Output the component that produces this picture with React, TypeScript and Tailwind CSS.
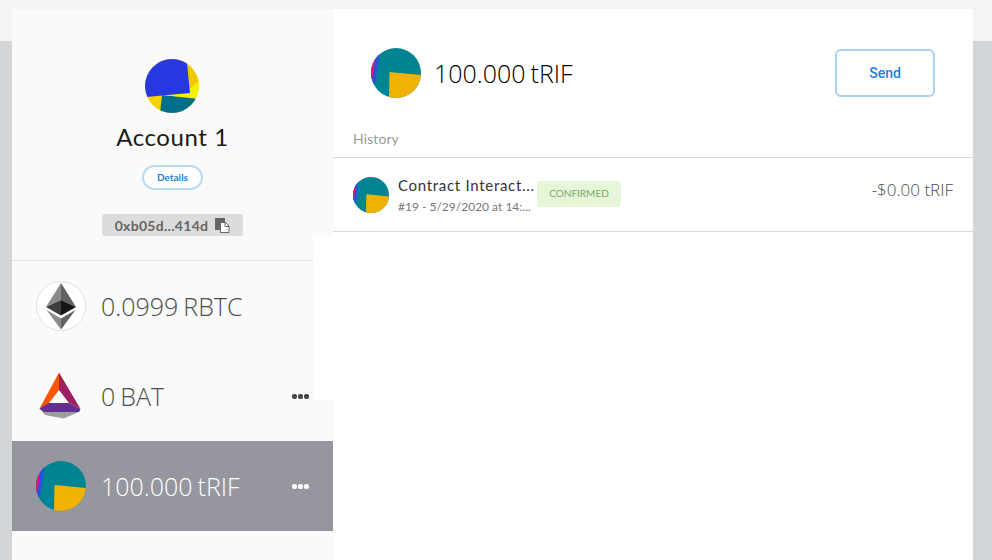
import React from 'react';

const TokenPie = ({ size }: { size: number }) => (
    <svg width={size} height={size} viewBox="0 0 50 50" className="shrink-0">
        <defs>
            <clipPath id={`pie-${size}`}>
                <circle cx="25" cy="25" r="25" />
            </clipPath>
        </defs>
        <g clipPath={`url(#pie-${size})`}>
            <rect width="50" height="50" fill="#008491" />
            <polygon points="0,0 9.5,0 4,36 0,36" fill="#2a52e0" />
            <polygon points="0,0 5.5,0 4,12 1,32 0,32" fill="#e8175d" />
            <polygon points="18.5,24 50,27 50,50 18,50" fill="#f2b200" />
        </g>
    </svg>
);

const AccountPie = () => (
    <svg width="54" height="54" viewBox="0 0 54 54">
        <defs>
            <clipPath id="acct">
                <circle cx="27" cy="27" r="27" />
            </clipPath>
        </defs>
        <g clipPath="url(#acct)">
            <rect width="54" height="54" fill="#f5ef00" />
            <polygon points="41,4 54,10 54,22 44,30" fill="#f0c905" />
            <polygon points="0,37 17,36 15,54 0,54" fill="#f5d100" />
            <polygon points="17,36 54,40 54,54 15,54" fill="#006f8c" />
            <polygon points="17,36 44,33 52,39 40,38" fill="#f5ef00" />
            <polygon points="-2,-4 41,-4 42,4 45,34 1,38 0,38" fill="#2639e0" />
        </g>
    </svg>
);

const EthIcon = () => (
    <div className="w-[50px] h-[50px] shrink-0 rounded-full border border-[#e2e2e2] bg-white">
        <svg width="48" height="48" viewBox="1 1 48 48">
            <polygon points="25,2 10,26 25,19" fill="#8a8a8a" />
            <polygon points="25,2 40,26 25,19" fill="#626262" />
            <polygon points="10,26 25,19 25,34.5" fill="#3d3d3d" />
            <polygon points="40,26 25,19 25,34.5" fill="#161616" />
            <polygon points="10.5,29 25,37.5 25,48.5" fill="#8c8c8c" />
            <polygon points="39.5,29 25,37.5 25,48.5" fill="#626262" />
        </svg>
    </div>
);

const BatIcon = () => (
    <svg width="50" height="50" viewBox="0 0 50 50" className="shrink-0">
        <polygon points="3.5,37.5 44,38 43,41 27.5,47.5 9,44" fill="#9e9e9e" />
        <polygon points="23,1.5 23,19 12.5,32.5 3.5,37.5" fill="#ff5400" />
        <polygon points="23,1.5 44.5,38 33,32 23,19" fill="#9e1f63" />
        <polygon points="12.5,32 33,32 44.5,38 43,41 8,41 3.5,37.5" fill="#662d91" />
    </svg>
);

const CopyIcon = () => (
    <svg width="15" height="15" viewBox="0 0 15 15" className="shrink-0">
        <rect x="0" y="0" width="10" height="12" rx="0.5" fill="#666666" />
        <path d="M5.5 4.5h5l3.5 3.5v6.5h-8.5z" fill="#ffffff" stroke="#666666" />
        <path d="M10 4.5v4h4" fill="none" stroke="#666666" />
    </svg>
);

const Dots = ({ color }: { color: string }) => (
    <div className={`flex gap-px ${color}`}>
        <span className="w-[5px] h-[5px] rounded-[2px] bg-current" />
        <span className="w-[5px] h-[5px] rounded-[2px] bg-current" />
        <span className="w-[5px] h-[5px] rounded-[2px] bg-current" />
    </div>
);

const TokenRow = ({
    icon,
    amount,
    symbol,
    active,
    menu,
}: {
    icon: React.ReactNode;
    amount: string;
    symbol: string;
    active?: boolean;
    menu?: boolean;
}) => (
    <div
        className={`h-[90px] pl-6 pr-6 flex items-center ${active ? 'bg-[#96969e] text-white' : 'text-[#4d4d4d]'}`}
    >
        {icon}
        <div className="ml-[15px] flex-1 flex gap-[5px] pt-[1px] text-[25px] font-['Open_Sans',sans-serif] font-light">
            <span>{amount}</span>
            <span>{symbol}</span>
        </div>
        {menu && <Dots color={active ? 'text-white' : 'text-[#444444]'} />}
    </div>
);

export default function App() {
    return (
        <div className="h-[560px] overflow-hidden pt-[9px] pl-3 bg-[linear-gradient(#f2f4f6_41px,#d2d6d9_41px)] font-['Lato',sans-serif]">
            <div className="w-[961px] h-[551px] flex bg-white relative">
                <div className="w-[321px] bg-[#fafafa] flex flex-col">
                    <div className="h-[252px] flex flex-col items-center border-b border-[#e4e4e4]">
                        <div className="mt-[50px] h-[54px] mr-px">
                            <AccountPie />
                        </div>
                        <h1 className="mt-[10px] text-[24px] leading-[28px] tracking-[0.6px] text-[#1a1a1a]">
                            Account 1
                        </h1>
                        <button className="mt-[14px] w-[61px] h-[25px] rounded-full border-2 border-[#b5daf6] bg-white text-[10px] font-bold text-[#1a82e2]">
                            Details
                        </button>
                        <div className="mt-6 w-[141px] h-[22px] rounded-[3px] bg-[#dcdcdc] flex items-center justify-center gap-[7px] text-[14px] font-bold tracking-[0.3px] text-[#666666]">
                            <span>0xb05d...414d</span>
                            <CopyIcon />
                        </div>
                    </div>
                    <TokenRow icon={<EthIcon />} amount="0.0999" symbol="RBTC" />
                    <TokenRow icon={<BatIcon />} amount="0" symbol="BAT" menu />
                    <TokenRow icon={<TokenPie size={50} />} amount="100.000" symbol="tRIF" active menu />
                </div>

                <div className="flex-1 flex flex-col">
                    <div className="h-[149px] flex flex-col border-b border-[#d9d9d9]">
                        <div className="mt-[39px] pl-[38px] pr-[38px] flex items-center">
                            <TokenPie size={50} />
                            <div className="ml-[13px] flex-1 flex gap-[5px] pt-[1px] text-[25px] font-['Open_Sans',sans-serif] font-light text-[#000000]">
                                <span>100.000</span>
                                <span>tRIF</span>
                            </div>
                            <button className="w-[100px] h-[48px] rounded-[6px] border-2 border-[#a9d3f3] bg-white text-[14px] font-medium font-['Roboto',sans-serif] text-[#1a82e2]">
                                Send
                            </button>
                        </div>
                        <div className="mt-[32px] pl-5 text-[14px] leading-[18px] tracking-[0.1px] text-[#9a9a9e]">
                            History
                        </div>
                    </div>
                    <div className="h-[74px] pl-5 pr-5 flex items-center border-b border-[#d9d9d9]">
                        <TokenPie size={36} />
                        <div className="ml-[9px] w-[139px]">
                            <div className="text-[15px] leading-[20px] tracking-[0.7px] text-[#333333] whitespace-nowrap">
                                Contract Interact...
                            </div>
                            <div className="mt-1 text-[12px] leading-[16px] text-[#777777] whitespace-nowrap">
                                #19 - 5/29/2020 at 14:...
                            </div>
                        </div>
                        <div className="w-[84px] h-[26px] mb-[2px] rounded-[4px] bg-[#e6f6d9] flex items-center justify-center text-[10px] text-[#7ba668]">
                            CONFIRMED
                        </div>
                        <div className="ml-auto mb-[10px] text-[17px] font-['Open_Sans',sans-serif] font-light text-[#4d4d4d]">
                            -$0.00 tRIF
                        </div>
                    </div>
                </div>

                {/* white notch that overlaps the sidebar edge */}
                <div className="absolute left-[301px] top-[226px] w-5 h-[165px] bg-white" />
            </div>
        </div>
    );
}
